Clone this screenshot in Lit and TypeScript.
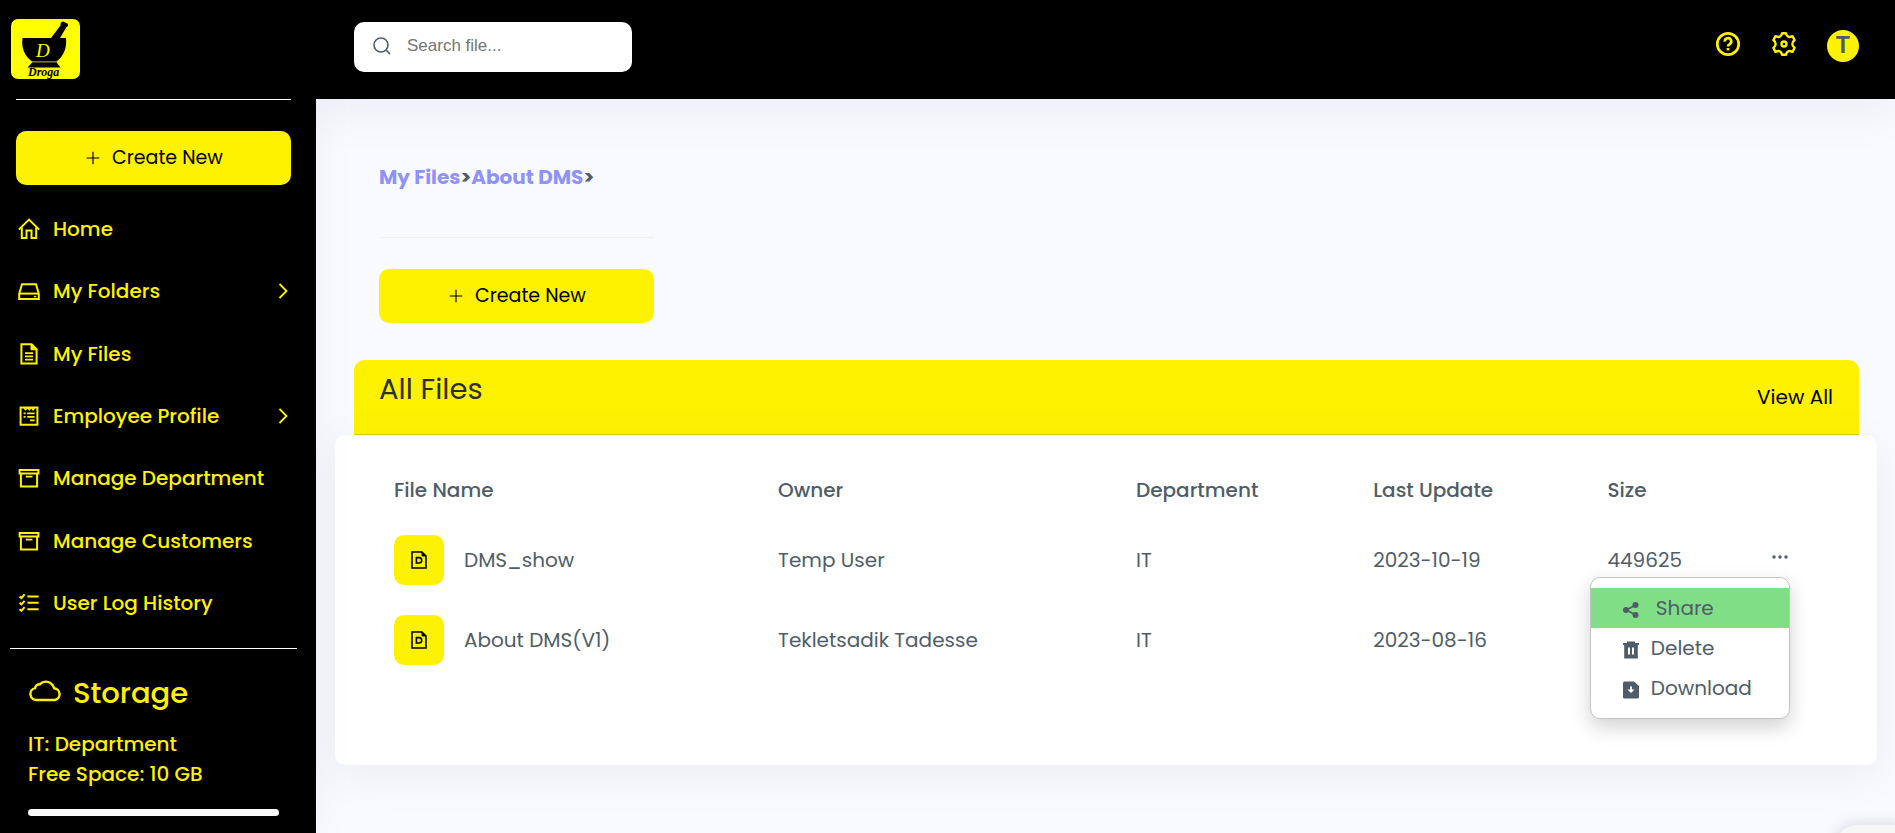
import { LitElement, html, css, svg, nothing } from "lit";
import { customElement } from "lit/decorators.js";

const line = (body: unknown, size = 22, width = 2) => html`
  <svg class="icon" width=${size} height=${size} viewBox="0 0 22 22" fill="none" stroke="currentColor"
    stroke-width=${width} aria-hidden="true">${body}</svg>`;

const icons = {
  home: svg`<path d="M0.800 11.600 L11 1.600 L21.200 11.600"/><path d="M3.800 9.400 V20 H8.500 V12.400 H13.500 V20 H18.200 V9.400"/>`,
  drive: svg`<path d="M1.200 13.800 L4 4.200 H18 L20.800 13.800 V19 H1.200 Z"/><path d="M1.200 13.600 H20.800"/><path d="M16 16.600 H18.200" stroke-width="1.400"/>`,
  file: svg`<path d="M3.400 1.200 H13.600 L18.600 6.200 V20.600 H3.400 Z"/><path d="M13 1.400 V6.800 H18.400 Z" fill="currentColor" stroke-width="1"/><path d="M7 10.200 H15 M7 13.400 H15 M7 16.600 H15" stroke-width="1.800"/>`,
  profile: svg`<path d="M2.600 2.400 H19.400 V19.800 H2.600 Z"/><path d="M6 3 L7.600 4.800 L9.200 3 M10 3 L11.200 4.800 L12.800 3 M13.600 3 L15 4.800 L16.600 3" stroke-width="1.400"/><path d="M5.600 8.400 H7.600 M9.200 8.400 H16.600 M5.600 11.800 H7.600 M9.200 11.800 H16.600 M12 15.400 H16.600" stroke-width="1.800"/>`,
  archive: svg`<path d="M1.600 3 H20.400 V6.400 H1.600 Z"/><path d="M2.900 6.400 V19.400 H19.100 V6.400"/><path d="M7.800 9.600 H14.400" stroke-width="1.800"/>`,
  checks: svg`<path d="M9.400 4.400 H20.600 M9.400 10.800 H20.600 M9.400 17.200 H20.600" stroke-width="2"/><path d="M1.600 4.400 L3.400 6 L6.600 2.400 M1.600 10.800 L3.400 12.400 L6.600 8.800 M1.600 17.200 L3.400 18.800 L6.600 15.200" stroke-width="2"/>`,
  chevron: svg`<path d="M7.500 4 L14.500 11 L7.500 18" stroke-width="1.800"/>`,
  plus: svg`<path d="M11 1 V21 M1 11 H21"/>`,
};

interface NavItem { label: string; icon: unknown; nested?: boolean; }
const NAV: NavItem[] = [
  { label: "Home", icon: icons.home },
  { label: "My Folders", icon: icons.drive, nested: true },
  { label: "My Files", icon: icons.file },
  { label: "Employee Profile", icon: icons.profile, nested: true },
  { label: "Manage Department", icon: icons.archive },
  { label: "Manage Customers", icon: icons.archive },
  { label: "User Log History", icon: icons.checks },
];

interface FileRow { name: string; owner: string; dept: string; date: string; size: string; open?: boolean; }
const FILES: FileRow[] = [
  { name: "DMS_show", owner: "Temp User", dept: "IT", date: "2023-10-19", size: "449625", open: true },
  { name: "About DMS(V1)", owner: "Tekletsadik Tadesse", dept: "IT", date: "2023-08-16", size: "" },
];

const base = css`
  :host { font-family: Poppins, Inter, sans-serif; font-size: 20px; line-height: 30px; }
  *, *::before, *::after { box-sizing: border-box; }
  a { color: inherit; text-decoration: none; }
  button { font: inherit; color: inherit; border: 0; background: none; padding: 0; cursor: pointer; }
  .icon { display: block; flex: none; }
`;

@customElement("create-button")
export class CreateButton extends LitElement {
  static styles = [base, css`
    :host { display: block; }
    .create {
      display: flex; align-items: center; justify-content: center; gap: 12px;
      width: 100%; height: 54px; padding-left: 2px; border-radius: 10px; background: #fff200; color: #000;
      font-size: 19px; font-weight: 400;
    }
  `];
  render() {
    return html`<button class="create">${line(icons.plus, 14, 1.8)}<span>Create New</span></button>`;
  }
}

@customElement("side-bar")
export class SideBar extends LitElement {
  static styles = [base, css`
    :host {
      display: flex; flex-direction: column; background: #000; color: #fff200;
      font-weight: 500; box-shadow: 0 0 40px rgba(20, 20, 50, 0.05); z-index: 2;
    }
    .brand { height: 99px; padding: 18px 10px; }
    .logo { display: block; }
    .top { margin: 0 25px 0 16px; padding-top: 31px; border-top: 1px solid #fff; }
    nav { flex: 1; display: flex; flex-direction: column; margin-top: 13px; padding: 0 22px 0 18px; }
    .item { flex: 1; display: flex; align-items: center; gap: 13px; min-height: 44px; }
    .label { flex: 1; }
    .storage { margin: 14px 19px 0 10px; padding: 26px 18px 17px; border-top: 1px solid #fff; }
    h2 { display: flex; align-items: center; gap: 11px; margin: 0 0 18px; font-size: 29px; line-height: 36px; font-weight: 500; }
    p { margin: 0; }
    .meter { height: 7px; margin-top: 20px; border-radius: 4px; background: #f9f9f9; }
  `];
  render() {
    return html`
      <div class="brand">
        <a href="#" aria-label="Droga">
          <svg class="logo" width="72" height="62" viewBox="0 0 72 62">
            <rect x="1" y="1" width="69" height="60" rx="7" fill="#ff0"/>
            <path d="M12.500 20 H41 L50.500 7.500 Q50 4 53 3.500 L57.500 5.500 Q59 8 56.500 9 L50 20 H56 Q57.500 35 46.500 43.500 H22 Q10.500 35 12.500 20 Z"/>
            <path d="M22.500 43.500 H46.500 Q47 46 50.500 49.500 H17.500 Q21.500 46 22.500 43.500 Z"/>
            <path d="M21 44 H48" stroke="#ff0" stroke-width="0.600"/>
            <text x="26" y="39" font-family="Brush Script MT, Liberation Serif, serif" font-style="italic" font-size="19" fill="#ff0">D</text>
            <text x="18" y="58" font-family="Brush Script MT, Liberation Serif, serif" font-style="italic" font-weight="700" font-size="12">Droga</text>
          </svg>
        </a>
      </div>
      <div class="top"><create-button></create-button></div>
      <nav>
        ${NAV.map((n) => html`
          <a class="item" href="#">${line(n.icon)}<span class="label">${n.label}</span>
            ${n.nested ? line(icons.chevron) : nothing}</a>`)}
      </nav>
      <section class="storage">
        <h2>
          <svg class="icon" width="34" height="26" viewBox="0 0 34 26" fill="none" stroke="currentColor" stroke-width="2.400" aria-hidden="true">
            <path d="M9 20 A6 6 0 0 1 7 8.200 A4.800 4.800 0 0 1 12 4.200 A8.200 8.200 0 0 1 25.500 6.800 L26.200 8.200 A6 6 0 0 1 27 20 Z"/>
          </svg>
          Storage
        </h2>
        <p>IT: Department</p>
        <p>Free Space: 10 GB</p>
        <div class="meter"></div>
      </section>`;
  }
}

@customElement("top-bar")
export class TopBar extends LitElement {
  static styles = [base, css`
    :host {
      display: flex; align-items: flex-start; justify-content: space-between; height: 99px;
      padding: 22px 36px 0 38px; background: #000; color: #fff200;
      box-shadow: 0 16px 48px rgba(20, 20, 50, 0.05);
    }
    .search { display: flex; align-items: center; gap: 16px; width: 278px; height: 50px; padding: 0 19px 2px; border-radius: 10px; background: #fff; color: #4f5d68; }
    input { flex: 1; min-width: 0; height: 30px; padding: 0; border: 0; outline: 0; background: none; font: 17px "Liberation Sans", sans-serif; color: #333; }
    input::placeholder { color: #757575; opacity: 1; }
    .actions { display: flex; align-items: center; gap: 30px; padding-top: 8px; }
    .avatar { display: grid; place-items: center; width: 32px; height: 32px; border-radius: 50%; background: #fff200; color: #4f5d68; font: 700 23px/32px Roboto, sans-serif; }
    .raised { margin-bottom: 4px; }
  `];
  render() {
    return html`
      <label class="search">
        <svg class="icon" width="18" height="18" viewBox="0 0 18 18" fill="none" stroke="currentColor" stroke-width="1.600" aria-hidden="true">
          <circle cx="8" cy="8" r="7"/><path d="M13 13 L17 17"/>
        </svg>
        <input type="text" placeholder="Search file..." aria-label="Search file">
      </label>
      <div class="actions">
        <button class="raised" aria-label="Help">
          <svg class="icon" width="26" height="26" viewBox="0 0 26 26" fill="none" stroke="currentColor" stroke-width="2.700" aria-hidden="true">
            <circle cx="13" cy="13" r="10.700"/>
            <path d="M9.800 10.600 A3.200 3.200 0 1 1 14.600 13.200 Q13 14 13 15.600"/><path d="M13 17 V19.400"/>
          </svg>
        </button>
        <button class="raised" aria-label="Settings">
          <svg class="icon" width="26" height="26" viewBox="0 0 26 26" fill="none" stroke="currentColor" stroke-width="2.400" stroke-linejoin="round" aria-hidden="true">
            <path d="M11.200 2.200 H14.800 Q15.600 5 17.200 5.700 Q18.600 6.400 21.400 5.200 L23.600 9 Q21.300 11 21.300 13 Q21.300 15 23.600 17 L21.400 20.800 Q18.600 19.600 17.200 20.300 Q15.600 21 14.800 23.800 H11.200 Q10.400 21 8.800 20.300 Q7.400 19.600 4.600 20.800 L2.400 17 Q4.700 15 4.700 13 Q4.700 11 2.400 9 L4.600 5.200 Q7.400 6.400 8.800 5.700 Q10.400 5 11.200 2.200 Z"/>
            <circle cx="13" cy="13" r="2.500"/>
          </svg>
        </button>
        <button class="avatar" aria-label="Account">T</button>
      </div>`;
  }
}

@customElement("file-menu")
export class FileMenu extends LitElement {
  static styles = [base, css`
    :host { position: relative; display: block; width: 16px; height: 24px; }
    .dots { display: flex; align-items: flex-start; width: 16px; height: 24px; padding-top: 7px; }
    .menu {
      position: absolute; z-index: 3; top: 29px; right: -2px; width: 200px; padding: 10px 0;
      border: 1px solid #c4c4c4; border-radius: 10px; background: #fff; box-shadow: 0 8px 20px rgba(0, 0, 0, 0.18);
    }
    .entry { display: flex; align-items: center; gap: 12px; width: 100%; height: 40px; padding-left: 32px; text-align: left; }
    .active { gap: 17px; background: #80de86; }
    .icon { margin-top: 4px; }
  `];
  render() {
    return html`
      <button class="dots" aria-label="File actions" aria-expanded="true">
        <svg width="16" height="4" viewBox="0 0 16 4" fill="currentColor" aria-hidden="true">
          <circle cx="2" cy="2" r="1.700"/><circle cx="8" cy="2" r="1.700"/><circle cx="14" cy="2" r="1.700"/>
        </svg>
      </button>
      <div class="menu">
        <button class="entry active">
          <svg class="icon" width="16" height="18" viewBox="0 0 16 18" fill="currentColor" aria-hidden="true">
            <path d="M12.500 4 L3.500 9 L12.500 14" fill="none" stroke="currentColor" stroke-width="1.600"/>
            <circle cx="3" cy="9" r="3"/><circle cx="12.500" cy="4" r="3"/><circle cx="12.500" cy="14" r="3"/>
          </svg>Share</button>
        <button class="entry">
          <svg class="icon" width="16" height="18" viewBox="0 0 16 18" fill="currentColor" aria-hidden="true">
            <path fill-rule="evenodd" d="M4 0.500 H12 V2 H16 V4 H14.800 V17.500 H1.200 V4 H0 V2 H4 Z M5 6.500 V13.500 H7 V6.500 Z M9 6.500 V13.500 H11 V6.500 Z"/>
          </svg>Delete</button>
        <button class="entry">
          <svg class="icon" width="16" height="18" viewBox="0 0 16 18" aria-hidden="true">
            <path fill="currentColor" d="M1.500 0.500 H11 L16 5 V16 Q16 17.500 14.500 17.500 H1.500 Q0 17.500 0 16 V2 Q0 0.500 1.500 0.500 Z"/>
            <path fill="#fff" d="M7 5.500 H9 V8.500 H11.500 L8 12 L4.500 8.500 H7 Z"/>
          </svg>Download</button>
      </div>`;
  }
}

@customElement("file-table")
export class FileTable extends LitElement {
  static styles = [base, css`
    :host { display: block; padding: 25px 43px 85px 44px; border-radius: 10px; background: #fff; box-shadow: 0 10px 48px rgba(20, 20, 50, 0.06); }
    table { width: 100%; table-layout: fixed; border-collapse: collapse; text-align: left; }
    th, td { padding: 15px; font-weight: 400; vertical-align: middle; white-space: nowrap; }
    th { font-weight: 500; }
    .name { width: 26.4%; }
    .owner { width: 24.6%; }
    .dept { width: 16.3%; }
    .date { width: 16.1%; }
    .size { width: 11.3%; }
    .file { display: flex; align-items: center; gap: 20px; }
    .tile { display: grid; place-items: center; width: 50px; height: 50px; border-radius: 10px; background: #fff200; color: #000; }
  `];
  render() {
    return html`
      <table>
        <thead><tr>
          <th class="name">File Name</th><th class="owner">Owner</th><th class="dept">Department</th>
          <th class="date">Last Update</th><th class="size">Size</th><th></th>
        </tr></thead>
        <tbody>
          ${FILES.map((f) => html`<tr>
            <td><div class="file"><span class="tile">
              <svg width="16" height="18" viewBox="0 0 16 18" fill="none" stroke="currentColor" stroke-width="1.600" aria-hidden="true">
                <path d="M1 1 H11 L15 5 V17 H1 Z"/><path d="M11 1 V5 H15 Z" fill="currentColor" stroke-width="1"/>
                <path d="M5.400 6.600 H8 A2.500 2.500 0 0 1 8 12 H5.400 Z"/>
              </svg></span>${f.name}</div></td>
            <td>${f.owner}</td><td>${f.dept}</td><td>${f.date}</td><td>${f.size}</td>
            <td>${f.open ? html`<file-menu></file-menu>` : nothing}</td>
          </tr>`)}
        </tbody>
      </table>`;
  }
}

@customElement("app-root")
export class AppRoot extends LitElement {
  static styles = [base, css`
    :host { position: relative; display: grid; grid-template-columns: 316px minmax(0, 1fr); min-height: 100vh; overflow: hidden; background: #f9faff; color: #4f5d68; }
    main { padding: 63px 36px 0 38px; }
    .intro { width: 275px; margin-left: 25px; }
    .crumbs { display: flex; font-weight: 700; white-space: nowrap; }
    .crumbs a { color: #8e92f9; }
    hr { height: 1px; margin: 45px 0 31px; border: 0; background: #eef0f3; }
    .heading { display: flex; align-items: center; justify-content: space-between; height: 75px; margin-top: 37px; padding: 0 26px 0 25px; border-bottom: 1px solid #dcd114; border-radius: 10px 10px 0 0; background: #fff200; }
    h1 { align-self: flex-start; margin: 11px 0 0; color: #2b2f32; font-size: 29px; line-height: 36px; font-weight: 400; }
    .all { color: #000; }
    file-table { margin: 0 -18px 0 -19px; }
    .chat { position: absolute; right: -20px; bottom: -52px; width: 80px; height: 60px; border-radius: 22px; background: #f7f7f7; box-shadow: 0 0 16px rgba(0, 0, 0, 0.16); }
  `];
  render() {
    return html`
      <side-bar></side-bar>
      <div>
        <top-bar></top-bar>
        <main>
          <div class="intro">
            <div class="crumbs"><a href="#">My Files</a><span>&gt;</span><a href="#">About DMS</a><span>&gt;</span></div>
            <hr>
            <create-button></create-button>
          </div>
          <div class="heading"><h1>All Files</h1><a class="all" href="#">View All</a></div>
          <file-table></file-table>
        </main>
      </div>
      <div class="chat"></div>`;
  }
}
